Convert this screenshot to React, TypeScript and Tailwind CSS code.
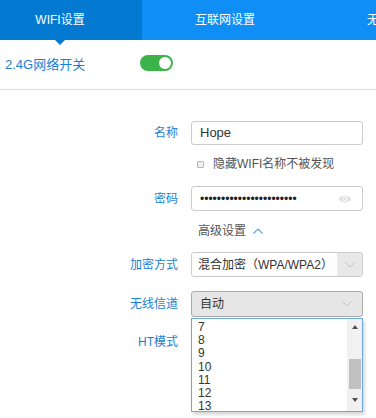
import React from "react";

const font = { fontFamily: '"Liberation Sans", "Noto Sans CJK SC", sans-serif' };

function Chevron({ className = "" }: { className?: string }) {
  return (
    <svg width="10" height="6" viewBox="0 0 10 6" className={className}>
      <path d="M0.5 0.5 L5 5 L9.5 0.5" fill="none" stroke="#c4c4c4" strokeWidth="1" />
    </svg>
  );
}

function Row({ label, children, className = "" }: { label: string; children?: React.ReactNode; className?: string }) {
  return (
    <div className={`flex items-center ${className}`.trim()}>
      <div className="w-[178px] text-right text-[12px] leading-[14px] text-[#1a7fd4]">{label}</div>
      <div className="ml-[13px] w-[172px] relative">{children}</div>
    </div>
  );
}

export default function App() {
  const channels = ["7", "8", "9", "10", "11", "12", "13"];
  return (
    <div className="w-[376px] h-[418px] bg-white overflow-hidden" style={font}>
      {/* tabs */}
      <div className="flex h-[40px] bg-[#0f8ff6] text-white text-[12px] relative">
        <div className="w-[142px] shrink-0 bg-[#0379d1] flex items-center">
          <span className="w-[120px] text-center">WIFI设置</span>
        </div>
        <div className="w-[166px] shrink-0 flex items-center justify-center">互联网设置</div>
        <div className="w-[166px] shrink-0 flex items-center justify-center">无线高级</div>
        <div className="absolute left-[55px] top-[40px] w-0 h-0 border-l-[5px] border-r-[5px] border-t-[5px] border-l-transparent border-r-transparent border-t-[#0379d1]" />
      </div>

      {/* 2.4G switch */}
      <div className="flex items-center h-[50px] border-b border-[#dddddd]">
        <span className="ml-[5px] text-[13px] text-[#1a7fd4] leading-[16px]">2.4G网络开关</span>
        <div className="ml-[55px] mt-[-4px] w-[33px] h-[16px] rounded-full bg-[#3db34c] flex items-center justify-end pr-[2px]">
          <div className="w-[12px] h-[12px] rounded-full bg-white" />
        </div>
      </div>

      <Row label="名称" className="mt-[31px]">
        <div className="h-[24px] border border-[#cccccc] rounded-[3px] flex items-center pl-[8px] text-[13px] text-[#333]">
          Hope
        </div>
      </Row>

      <div className="flex items-center mt-[12px] ml-[197px] h-[14px]">
        <div className="w-[7px] h-[7px] border border-[#b5b5b5] bg-[#f0f0f0] rounded-[1px]" />
        <span className="ml-[9px] text-[12px] text-[#555] leading-[14px]">隐藏WIFI名称不被发现</span>
      </div>

      <Row label="密码" className="mt-[15px]">
        <div className="h-[25px] border border-[#cccccc] rounded-[3px] flex items-center pl-[8px] pr-[10px] justify-between">
          <span className="text-[#222] text-[12px] leading-[12px]">
            •••••••••••••••••••••••
          </span>
          <svg width="14" height="10" viewBox="0 0 14 10">
            <path d="M0.5 5 C3 0.5 11 0.5 13.5 5 C11 9.5 3 9.5 0.5 5 Z" fill="#e0e0e0" />
            <circle cx="7" cy="5" r="2.6" fill="#f5f5f5" />
            <circle cx="7" cy="5" r="1.3" fill="#e0e0e0" />
          </svg>
        </div>
      </Row>

      <div className="flex items-center mt-[13px] ml-[198px] h-[14px]">
        <span className="text-[12px] text-[#555] leading-[14px]">高级设置</span>
        <svg width="10" height="6" viewBox="0 0 10 6" className="ml-[7px]">
          <path d="M0.5 5.5 L5 1 L9.5 5.5" fill="none" stroke="#5aa4e6" strokeWidth="1.2" />
        </svg>
      </div>

      <Row label="加密方式" className="mt-[14px]">
        <div className="h-[25px] border border-[#cccccc] rounded-[3px] flex overflow-hidden">
          <div className="flex-1 flex items-center pl-[6px] text-[12px] text-[#333]">混合加密（WPA/WPA2）</div>
          <div className="w-[25px] bg-[#e8e8e8] flex items-center justify-center">
            <Chevron />
          </div>
        </div>
      </Row>

      <Row label="无线信道" className="mt-[14px]">
        <div className="h-[26px] border border-[#aaaaaa] rounded-[3px] bg-[#e6e6e6] flex items-center justify-between pl-[8px] pr-[10px] text-[12px] text-[#333]">
          <span>自动</span>
          <Chevron />
        </div>
        {/* open dropdown list */}
        <div className="absolute left-0 top-[27px] w-[172px] h-[94px] bg-white border border-[#6aa8e0] flex z-10 shadow-[2px_3px_3px_rgba(0,0,0,0.15)]">
          <div className="flex-1 pt-[2px] pl-[6px] text-[12px] leading-[13.2px] text-[#333]">
            {channels.map((c) => (
              <div key={c}>{c}</div>
            ))}
          </div>
          <div className="w-[15px] bg-[#f1f1f1] flex flex-col items-center">
            <div className="mt-[6px] w-0 h-0 border-l-[3.5px] border-r-[3.5px] border-b-[4px] border-l-transparent border-r-transparent border-b-[#505050]" />
            <div className="mt-[30px] w-[12px] h-[30px] bg-[#c1c1c1]" />
            <div className="mt-[9px] w-0 h-0 border-l-[3.5px] border-r-[3.5px] border-t-[4px] border-l-transparent border-r-transparent border-t-[#505050]" />
          </div>
        </div>
      </Row>

      <Row label="HT模式" className="mt-[12px]">
        <div className="h-[26px] border border-[#cccccc] rounded-[3px]" />
      </Row>
    </div>
  );
}
